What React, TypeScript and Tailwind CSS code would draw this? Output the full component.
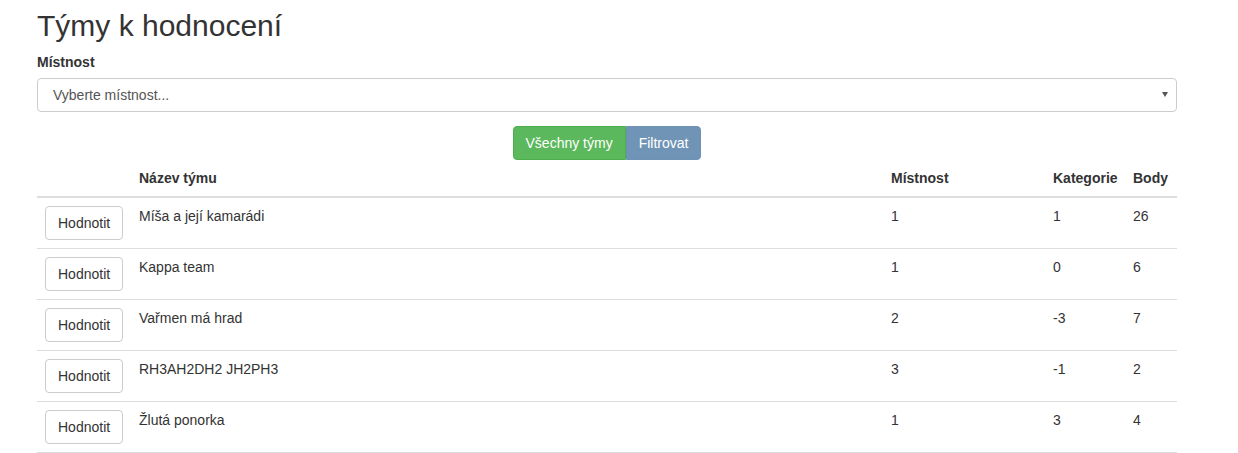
import React from "react";

const rows = [
  { name: "Míša a její kamarádi", room: "1", cat: "1", pts: "26" },
  { name: "Kappa team", room: "1", cat: "0", pts: "6" },
  { name: "Vařmen má hrad", room: "2", cat: "-3", pts: "7" },
  { name: "RH3AH2DH2 JH2PH3", room: "3", cat: "-1", pts: "2" },
  { name: "Žlutá ponorka", room: "1", cat: "3", pts: "4" },
];

export default function App() {
  return (
    <div className="min-h-[453px] bg-white pl-[37px] pr-[61px] font-['Liberation_Sans',Arial,sans-serif] text-[14px] leading-[20px] text-[#333]">
      <h1 className="pt-[9px] text-[30px] leading-[33px] font-normal text-[#333]">Týmy k hodnocení</h1>
      <label className="mt-[10px] mb-[6px] block font-bold">Místnost</label>
      <div className="relative flex h-[34px] items-center rounded-[4px] border border-[#ccc] bg-white pl-[15px] text-[#555]">
        <span>Vyberte místnost...</span>
        <span className="absolute right-[8px] top-[13px] h-0 w-0 border-x-[3px] border-t-[5px] border-x-transparent border-t-[#555]" />
      </div>
      <div className="mt-[14px] flex justify-center">
        <div className="flex">
          <button className="h-[34px] rounded-l-[4px] border border-[#4cae4c] bg-[#5cb85c] px-[12px] text-white">Všechny týmy</button>
          <button className="h-[34px] rounded-r-[4px] border border-[#6e92b4] bg-[#7094b6] px-[12px] text-white">Filtrovat</button>
        </div>
      </div>
      <table className="w-full table-fixed border-collapse">
        <colgroup>
          <col className="w-[94px]" />
          <col />
          <col className="w-[162px]" />
          <col className="w-[80px]" />
          <col className="w-[52px]" />
        </colgroup>
        <thead>
          <tr>
            <th className="border-b-2 border-[#ddd] p-[8px] text-left font-bold"></th>
            <th className="border-b-2 border-[#ddd] p-[8px] text-left font-bold">Název týmu</th>
            <th className="border-b-2 border-[#ddd] p-[8px] text-left font-bold">Místnost</th>
            <th className="border-b-2 border-[#ddd] p-[8px] text-left font-bold">Kategorie</th>
            <th className="border-b-2 border-[#ddd] p-[8px] text-left font-bold">Body</th>
          </tr>
        </thead>
        <tbody>
          {rows.map((r, i) => (
            <tr key={i} className="border-b border-[#ddd]">
              <td className="p-[8px] align-top">
                <button className="h-[34px] rounded-[4px] border border-[#ccc] bg-white px-[12px] text-[#333]">Hodnotit</button>
              </td>
              <td className="p-[8px] align-top">{r.name}</td>
              <td className="p-[8px] align-top">{r.room}</td>
              <td className="p-[8px] align-top">{r.cat}</td>
              <td className="p-[8px] align-top">{r.pts}</td>
            </tr>
          ))}
        </tbody>
      </table>
    </div>
  );
}
